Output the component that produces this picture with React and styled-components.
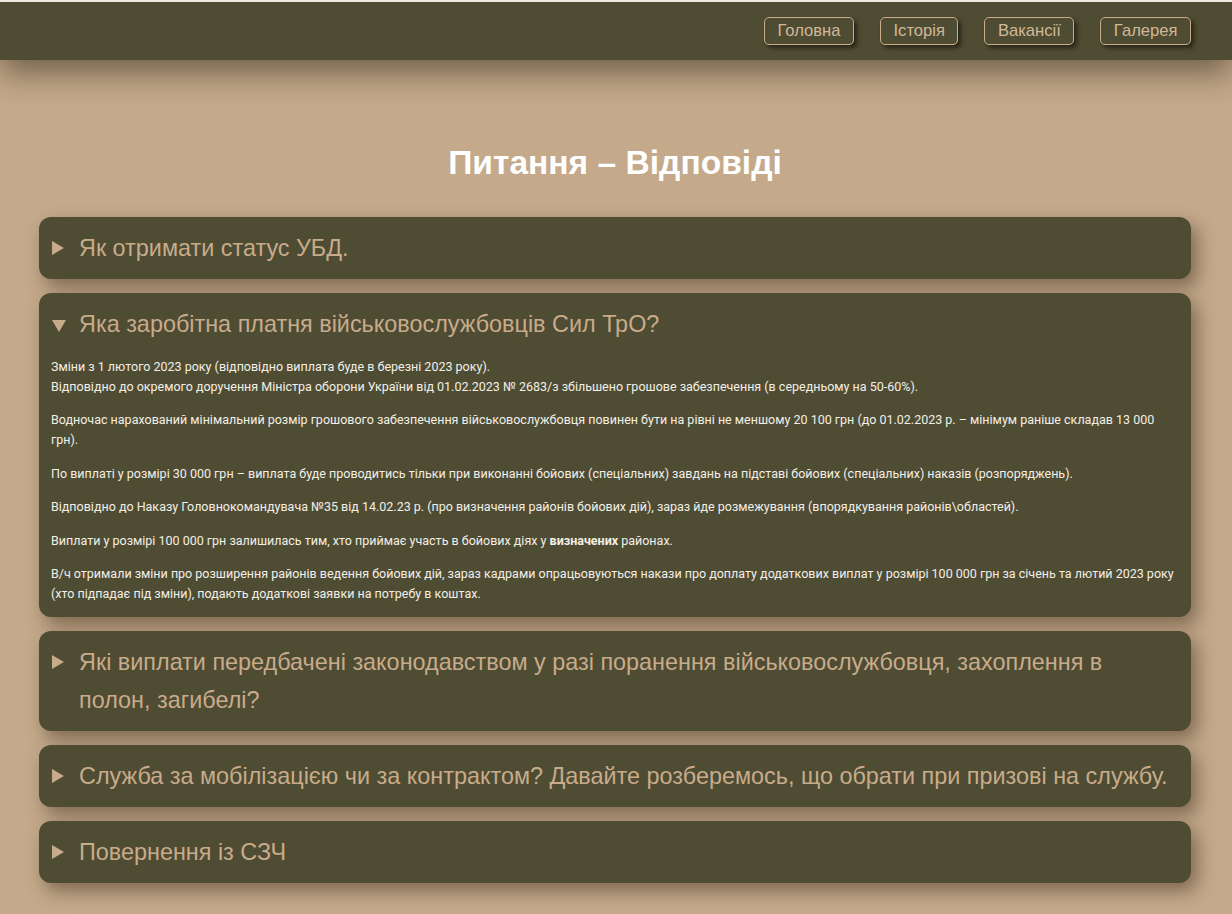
import React from 'react';
import styled, { createGlobalStyle } from 'styled-components';

const GlobalStyle = createGlobalStyle`
  html, body {
    margin: 0;
    padding: 0;
    background: #c4a98a;
  }
  body {
    font-family: "Liberation Sans", Arial, sans-serif;
    min-height: 914px;
  }
`;

const Header = styled.header`
  position: relative;
  z-index: 2;
  height: 58px;
  border-top: 2px solid #ece8df;
  background: #4f4c34;
  box-shadow: 0 12px 32px rgba(40, 32, 20, 0.55);
  display: flex;
  align-items: center;
  justify-content: flex-end;
  gap: 26px;
  padding: 0 41px;
`;

const NavButton = styled.a`
  display: block;
  font-family: "Liberation Sans", Arial, sans-serif;
  font-size: 16.6px;
  line-height: 18px;
  color: #d2b896;
  padding: 4px 12.5px;
  border: 1px solid #c9ad8a;
  border-radius: 5px;
  box-shadow: 3px 3px 4px rgba(25, 22, 12, 0.7);
  cursor: pointer;
`;

const Main = styled.main`
  padding: 0 41px 30px 39px;
`;

const Title = styled.h1`
  margin: 0;
  padding: 85px 0 36px;
  text-align: center;
  font-family: "Liberation Sans", Arial, sans-serif;
  font-weight: bold;
  font-size: 33.6px;
  line-height: 36px;
  color: #ffffff;
`;

const List = styled.div`
  display: flex;
  flex-direction: column;
  gap: 14px;
`;

const Item = styled.details`
  background: #4f4c34;
  border-radius: 12px;
  padding: 12px 12px 0;
  box-shadow: 6px 8px 18px rgba(70, 52, 34, 0.55);

  &:not([open]) {
    padding-bottom: 12px;
  }
`;

const Question = styled.summary`
  list-style: none;
  display: flex;
  align-items: flex-start;
  font-family: "Liberation Sans", Arial, sans-serif;
  font-size: 23.4px;
  line-height: 38px;
  color: #c8ab8a;
  cursor: pointer;

  &::-webkit-details-marker {
    display: none;
  }

  &::before {
    content: "";
    flex: none;
    width: 0;
    height: 0;
    margin: 12px 15px 0 1px;
    border-top: 7px solid transparent;
    border-bottom: 7px solid transparent;
    border-left: 12px solid #c8ab8a;
  }

  details[open] > &::before {
    margin: 15px 13px 0 1px;
    border-left: 7px solid transparent;
    border-right: 7px solid transparent;
    border-top: 12px solid #c8ab8a;
    border-bottom: 0;
  }
`;

const Answer = styled.div`
  font-family: Roboto, "Liberation Sans", sans-serif;
  font-size: 12.5px;
  line-height: 20px;
  color: #f3efe6;
  padding-bottom: 1px;

  p {
    margin: 13.5px 0;
  }

  p:last-child {
    margin-bottom: 12px;
  }
`;

const questions = [
  { q: 'Як отримати статус УБД.' },
  {
    q: 'Яка заробітна платня військовослужбовців Сил ТрО?',
    open: true,
    a: (
      <>
        <p>
          Зміни з 1 лютого 2023 року (відповідно виплата буде в березні 2023 року).
          <br />
          Відповідно до окремого доручення Міністра оборони України від 01.02.2023 № 2683/з збільшено грошове забезпечення (в середньому на 50-60%).
        </p>
        <p>
          Водночас нарахований мінімальний розмір грошового забезпечення військовослужбовця повинен бути на рівні не меншому 20 100 грн (до 01.02.2023 р. – мінімум раніше складав 13 000 грн).
        </p>
        <p>
          По виплаті у розмірі 30 000 грн – виплата буде проводитись тільки при виконанні бойових (спеціальних) завдань на підставі бойових (спеціальних) наказів (розпоряджень).
        </p>
        <p>
          Відповідно до Наказу Головнокомандувача №35 від 14.02.23 р. (про визначення районів бойових дій), зараз йде розмежування (впорядкування районів\областей).
        </p>
        <p>
          Виплати у розмірі 100 000 грн залишилась тим, хто приймає участь в бойових діях у <b>визначених</b> районах.
        </p>
        <p>
          В/ч отримали зміни про розширення районів ведення бойових дій, зараз кадрами опрацьовуються накази про доплату додаткових виплат у розмірі 100 000 грн за січень та лютий 2023 року (хто підпадає під зміни), подають додаткові заявки на потребу в коштах.
        </p>
      </>
    ),
  },
  { q: 'Які виплати передбачені законодавством у разі поранення військовослужбовця, захоплення в полон, загибелі?' },
  { q: 'Служба за мобілізацією чи за контрактом? Давайте розберемось, що обрати при призові на службу.' },
  { q: 'Повернення із СЗЧ' },
];

const navLinks = ['Головна', 'Історія', 'Вакансії', 'Галерея'];

export default function App() {
  return (
    <>
      <GlobalStyle />
      <Header>
        {navLinks.map((link) => (
          <NavButton key={link}>{link}</NavButton>
        ))}
      </Header>
      <Main>
        <Title>Питання – Відповіді</Title>
        <List>
          {questions.map((item) => (
            <Item key={item.q} open={item.open}>
              <Question>{item.q}</Question>
              {item.a && <Answer>{item.a}</Answer>}
            </Item>
          ))}
        </List>
      </Main>
    </>
  );
}
